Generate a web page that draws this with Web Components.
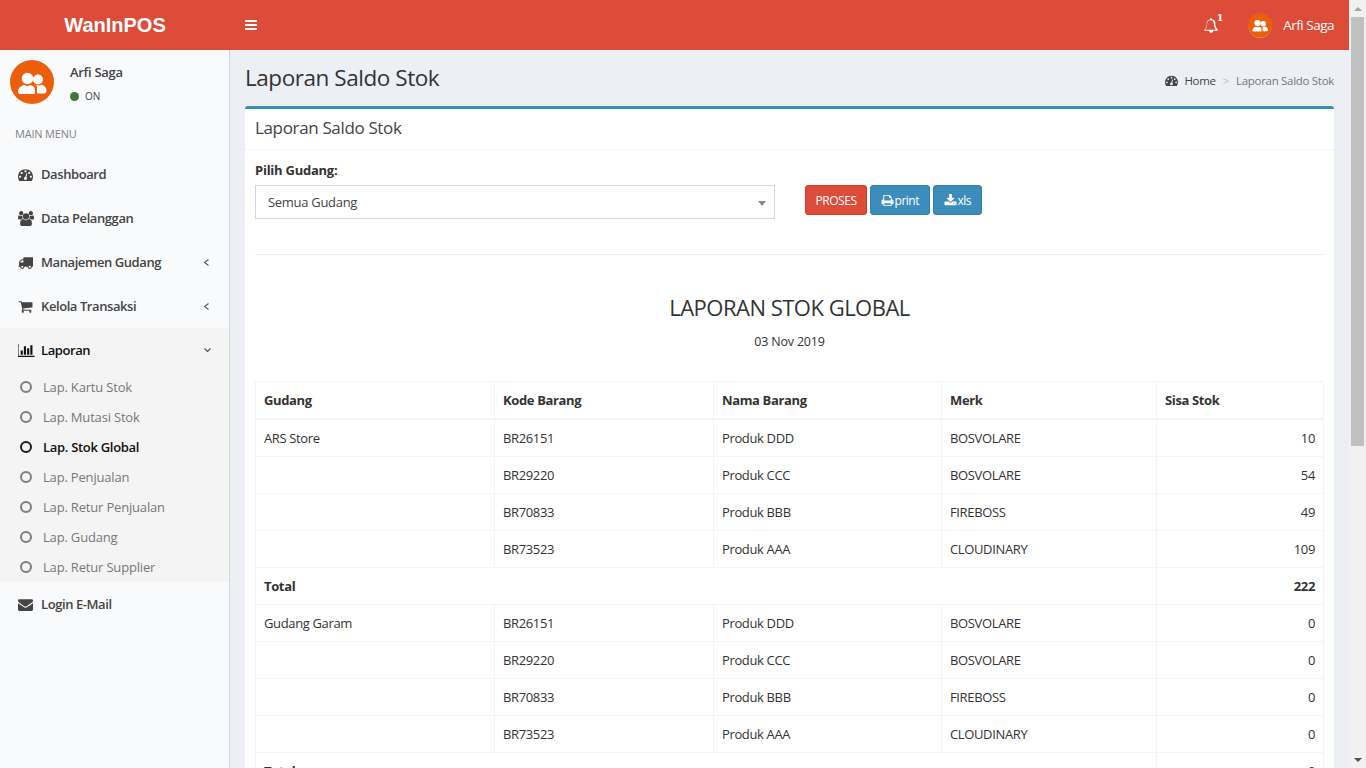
<!DOCTYPE html>
<html lang="id">
<head>
<meta charset="utf-8">
<title>Laporan Saldo Stok</title>
<style>
    html, body { margin: 0; height: 768px; overflow: hidden; }
    body { font-family: "Open Sans", sans-serif; font-size: 13px; color: #333; display: flex; }
</style>
</head>
<body>
<app-shell>
    <top-bar slot="top"></top-bar>
    <side-bar slot="side"></side-bar>
    <page-title></page-title>
    <report-box></report-box>
</app-shell>
<page-scrollbar></page-scrollbar>

<script>
const ICONS = {
    bars: ["0 0 1536 1792", "M1536 1344v128q0 26-19 45t-45 19h-1408q-26 0-45-19t-19-45v-128q0-26 19-45t45-19h1408q26 0 45 19t19 45zm0-512v128q0 26-19 45t-45 19h-1408q-26 0-45-19t-19-45v-128q0-26 19-45t45-19h1408q26 0 45 19t19 45zm0-512v128q0 26-19 45t-45 19h-1408q-26 0-45-19t-19-45v-128q0-26 19-45t45-19h1408q26 0 45 19t19 45z"],
    dashboard: ["0 0 1792 1792", "M384 1152q0-53-37.500-90.500t-90.500-37.500-90.500 37.500-37.500 90.500 37.500 90.500 90.500 37.500 90.500-37.500 37.500-90.500zm192-448q0-53-37.500-90.500t-90.500-37.500-90.500 37.500-37.500 90.500 37.500 90.500 90.500 37.500 90.500-37.500 37.500-90.500zm428 506l101-382q6-26-7.500-48.500t-38.500-29.500-48 6.500-30 39.500l-101 382q-60 5-107 43.500t-63 98.500q-20 77 20 146t117 89 146-20 89-117q16-60-6-117t-72-91zm660-58q0-53-37.500-90.500t-90.500-37.500-90.500 37.500-37.500 90.500 37.500 90.500 90.500 37.500 90.500-37.500 37.500-90.500zm-640-640q0-53-37.500-90.500t-90.500-37.500-90.500 37.500-37.500 90.500 37.500 90.500 90.500 37.500 90.500-37.500 37.500-90.500zm448 192q0-53-37.500-90.500t-90.500-37.500-90.500 37.500-37.500 90.500 37.500 90.500 90.500 37.500 90.500-37.500 37.500-90.500zm320 448q0 261-141 483-19 29-54 29h-1402q-35 0-54-29-141-221-141-483 0-182 71-348t191-286 286-191 348-71 348 71 286 191 191 286 71 348z"],
    users: ["0 0 1920 1792", "M593 896q-162 5-265 128h-134q-82 0-138-40.500t-56-118.500q0-353 124-353 6 0 43.500 21t97.500 42.500 119 21.500q67 0 133-23-5 37-5 66 0 139 81 256zm1071 637q0 120-73 189.500t-194 69.500h-874q-121 0-194-69.500t-73-189.500q0-53 3.500-103.500t14-109 26.500-108.500 43-97.500 62-81 85.500-53.500 111.500-20q10 0 43 21.500t73 48 107 48 135 21.500 135-21.500 107-48 73-48 43-21.500q61 0 111.500 20t85.500 53.500 62 81 43 97.500 26.500 108.500 14 109 3.500 103.500zm-1024-1277q0 106-75 181t-181 75-181-75-75-181 75-181 181-75 181 75 75 181zm704 384q0 159-112.500 271.500t-271.500 112.500-271.500-112.500-112.500-271.500 112.500-271.500 271.500-112.500 271.500 112.500 112.500 271.500zm576 225q0 78-56 118.500t-138 40.500h-134q-103-123-265-128 81-117 81-256 0-29-5-66 66 23 133 23 59 0 119-21.500t97.500-42.500 43.500-21q124 0 124 353zm-128-609q0 106-75 181t-181 75-181-75-75-181 75-181 181-75 181 75 75 181z"],
    truck: ["0 0 1792 1792", "M640 1408q0-52-38-90t-90-38-90 38-38 90 38 90 90 38 90-38 38-90zm-384-512h384v-256h-158q-13 0-22 9l-195 195q-9 9-9 22v30zm1280 512q0-52-38-90t-90-38-90 38-38 90 38 90 90 38 90-38 38-90zm256-1088v1024q0 15-4 26.500t-13.500 18.500-16.500 11.500-23.500 6-22.500 2-25.500 0-22.500-.5q0 106-75 181t-181 75-181-75-75-181h-384q0 106-75 181t-181 75-181-75-75-181h-64q-3 0-22.500.5t-25.500 0-22.500-2-23.500-6-16.500-11.500-13.500-18.500-4-26.500q0-26 19-45t45-19v-320q0-8-.5-35t0-38 2.500-34.500 6.500-37 14-30.500 22.500-30l198-198q19-19 50.500-32t58.500-13h160v-192q0-26 19-45t45-19h1024q26 0 45 19t19 45z"],
    cart: ["0 0 1792 1792", "M704 1536q0 52-38 90t-90 38-90-38-38-90 38-90 90-38 90 38 38 90zm896 0q0 52-38 90t-90 38-90-38-38-90 38-90 90-38 90 38 38 90zm128-1088v512q0 24-16.500 42.500t-40.500 21.500l-1044 122q13 60 13 70 0 16-24 64h920q26 0 45 19t19 45-19 45-45 19h-1024q-26 0-45-19t-19-45q0-11 8-31.500t16-36 21.500-40 15.500-29.500l-177-823h-204q-26 0-45-19t-19-45 19-45 45-19h256q16 0 28.500 6.500t19.500 15.500 13 24.500 8 26 5.500 29.500 4.500 26h1201q26 0 45 19t19 45z"],
    chart: ["0 0 2048 1792", "M576 896v512h-256v-512h256zm384-512v1024h-256v-1024h256zm1024 1152v128h-2048v-1536h128v1408h1920zm-640-896v768h-256v-768h256zm384-384v1152h-256v-1152h256z"],
    envelope: ["0 0 1792 1792", "M1792 710v794q0 66-47 113t-113 47h-1472q-66 0-113-47t-47-113v-794q44 49 101 87 362 246 497 345 57 42 92.500 65.500t94.500 48 110 24.500h2q51 0 110-24.500t94.500-48 92.500-65.500q170-123 498-345 57-39 100-87zm0-294q0 79-49 151t-122 123q-376 261-468 325-10 7-42.500 30.500t-54 38-52 32.500-57.500 27-50 9h-2q-23 0-50-9t-57.500-27-52-32.500-54-38-42.500-30.500q-91-64-262-182.500t-205-142.500q-62-42-117-115.500t-55-136.500q0-78 41.500-130t118.500-52h1472q65 0 112.500 47t47.500 113z"],
    print: ["0 0 1792 1792", "M448 1536h896v-256h-896v256zm0-640h896v-384h-160q-40 0-68-28t-28-68v-160h-640v640zm1152 64q0-26-19-45t-45-19-45 19-19 45 19 45 45 19 45-19 19-45zm128 0v416q0 13-9.500 22.500t-22.500 9.500h-224v160q0 40-28 68t-68 28h-960q-40 0-68-28t-28-68v-160h-224q-13 0-22.500-9.500t-9.500-22.500v-416q0-79 56.500-135.500t135.500-56.500h64v-544q0-40 28-68t68-28h672q40 0 88 20t76 48l152 152q28 28 48 76t20 88v256h64q79 0 135.500 56.500t56.500 135.500z"],
    download: ["0 0 1792 1792", "M1344 1344q0-26-19-45t-45-19-45 19-19 45 19 45 45 19 45-19 19-45zm256 0q0-26-19-45t-45-19-45 19-19 45 19 45 45 19 45-19 19-45zm128-224v320q0 40-28 68t-68 28h-1472q-40 0-68-28t-28-68v-320q0-40 28-68t68-28h465l135 136q58 56 136 56t136-56l136-136h464q40 0 68 28t28 68zm-325-569q17 41-14 70l-448 448q-18 19-45 19t-45-19l-448-448q-31-29-14-70 17-39 59-39h256v-448q0-26 19-45t45-19h256q26 0 45 19t19 45v448h256q42 0 59 39z"],
    bell: ["0 0 1792 1792", "M912 1696q0-16-16-16-59 0-101.500-42.500t-42.500-101.500q0-16-16-16t-16 16q0 73 51.500 124.500t124.500 51.500q16 0 16-16zm-666-288h1300q-266-300-266-832 0-51-24-105t-69-103-121.500-80.500-169.500-31.500-169.500 31.500-121.500 80.500-69 103-24 105q0 532-266 832zm1546 0q0 52-38 90t-90 38h-448q0 106-75 181t-181 75-181-75-75-181h-448q-52 0-90-38t-38-90q50-42 91-88t85-119.500 74.500-158.500 50-206 19.500-260q0-152 117-282.500t307-158.500q-8-19-8-39 0-40 28-68t68-28 68 28 28 68q0 20-8 39 190 28 307 158.500t117 282.500q0 139 19.500 260t50 206 74.500 158.500 85 119.500 91 88z"]
};

const FONT = `"Open Sans", "Noto Sans", sans-serif`;

function icon(name, size) {
    const [box, d] = ICONS[name];
    const w = box.split(" ")[2] / 1792 * size;
    return `<svg width="${w}" height="${size}" viewBox="${box}" fill="currentColor" style="display:block"><path d="${d}"/></svg>`;
}

// orange round avatar with two people, used in the header and the sidebar
function avatar(size) {
    return `<svg width="${size}" height="${size}" viewBox="0 0 44 44" style="display:block">
        <circle cx="22" cy="22" r="22" fill="#eb5e0b"/>
        <g fill="#fff">
            <circle cx="17.500" cy="18.500" r="5.800"/>
            <circle cx="28" cy="19.500" r="5"/>
            <path d="M8 31.500c0-3.500 3.500-6 6.500-6.500 2 1.300 4 1.300 6 0 2 .5 3.700 1.500 4.300 3.500v5.500h-14.800c-1.200 0-2-1-2-2.500z"/>
            <path d="M31.500 24.800c2.500.7 5 2.700 5 6 0 1.500-.8 2.700-2 2.700h-7.500v-6c0-1-.6-2-1.200-2.700 2 .8 4.200.8 5.700 0z"/>
        </g>
    </svg>`;
}

class AppShell extends HTMLElement {
    constructor() {
        super();
        this.attachShadow({ mode: "open" });
        this.shadowRoot.innerHTML = `
            <style>
                :host { display: flex; flex-direction: column; width: 1349px; height: 768px; flex: none; background: #ecf0f5; overflow: hidden; }
                .row { display: flex; flex: 1; min-height: 0; }
                main { flex: 1; min-width: 0; padding: 0 15px; }
            </style>
            <slot name="top"></slot>
            <div class="row">
                <slot name="side"></slot>
                <main><slot></slot></main>
            </div>`;
    }
}

class TopBar extends HTMLElement {
    constructor() {
        super();
        this.attachShadow({ mode: "open" });
        this.shadowRoot.innerHTML = `
            <style>
                :host { display: flex; align-items: center; height: 50px; flex: none; background: #dd4b39; color: #fff; }
                .logo { width: 230px; text-align: center; font: bold 20px "Liberation Sans", Arial, sans-serif; }
                .toggle { margin-left: 15px; }
                .right { margin-left: auto; display: flex; align-items: center; padding-right: 15px; }
                .bell { position: relative; margin-right: 30px; }
                .badge { position: absolute; top: -6px; right: -5px; font: bold 9.500px "DejaVu Serif", serif; }
                .name { font: 13.500px ${FONT}; margin-left: 11px; letter-spacing: -.5px; }
                .av { border-radius: 50%; box-shadow: 0 1px 0 #f08a4a; }
            </style>
            <div class="logo">WanInPOS</div>
            <div class="toggle">${icon("bars", 14)}</div>
            <div class="right">
                <div class="bell">${icon("bell", 15)}<span class="badge">1</span></div>
                <div class="av">${avatar(24)}</div>
                <span class="name">Arfi Saga</span>
            </div>`;
    }
}

class SideItem extends HTMLElement {
    constructor() {
        super();
        this.attachShadow({ mode: "open" });
    }
    connectedCallback() {
        const arrow = this.getAttribute("arrow");
        const down = arrow === "down";
        const chevron = down ? "M.5.5l3 3 3-3" : "M4.500.5l-4 3 4 3";
        this.shadowRoot.innerHTML = `
            <style>
                :host { display: flex; align-items: center; height: 44px; padding-left: 18px; padding-right: 18px; color: #444; font: 600 13px ${FONT}; letter-spacing: -.42px; }
                :host([open]) { background: #f4f4f5; color: #111; }
                :host([arrow="left"]) { padding-right: 20px; }
                .ic { width: 23px; flex: none; }
                .label { flex: 1; }
                svg.ch { display: block; }
            </style>
            <span class="ic">${icon(this.getAttribute("icon"), 15)}</span>
            <span class="label">${this.getAttribute("label")}</span>
            ${arrow ? `<svg class="ch" width="${down ? 7 : 5}" height="${down ? 4 : 7}" viewBox="0 0 ${down ? "7 4" : "5 7"}" fill="none" stroke="#555" stroke-width="1.100"><path d="${chevron}"/></svg>` : ""}`;
    }
}

class SubItem extends HTMLElement {
    constructor() {
        super();
        this.attachShadow({ mode: "open" });
        this.shadowRoot.innerHTML = `
            <style>
                :host { display: flex; align-items: center; height: 30px; padding-left: 20px; color: #777; font: 13px ${FONT}; letter-spacing: -.18px; }
                :host([active]) { color: #111; font-weight: 600; letter-spacing: -.3px; }
                i { width: 8px; height: 8px; border: 2px solid currentColor; border-radius: 50%; margin-right: 11px; opacity: .95; }
            </style>
            <i></i><span><slot></slot></span>`;
    }
}

class SideBar extends HTMLElement {
    constructor() {
        super();
        this.attachShadow({ mode: "open" });
        this.shadowRoot.innerHTML = `
            <style>
                :host { display: block; width: 229px; flex: none; background: #f9fafc; border-right: 1px solid #d2d6de; }
                .user { display: flex; padding: 10px 10px 0; height: 49px; }
                .user .txt { margin-left: 16px; color: #444; }
                .nm { font: 600 13px ${FONT}; margin-top: 3px; letter-spacing: -.3px; }
                .st { display: flex; align-items: center; font: 10px ${FONT}; margin-top: 8px; }
                .st i { width: 9px; height: 9px; border-radius: 50%; background: #3c7a3c; margin-right: 6px; }
                .head { font: 11px ${FONT}; color: #848484; padding: 17px 15px 0; height: 36px; box-sizing: border-box; letter-spacing: -.2px; }
                .group { background: #f4f4f5; }
                .menu { margin-top: 7px; }
            </style>
            <div class="user">
                ${avatar(44)}
                <div class="txt">
                    <div class="nm">Arfi Saga</div>
                    <div class="st"><i></i>ON</div>
                </div>
            </div>
            <div class="head">MAIN MENU</div>
            <div class="menu">
                <side-item icon="dashboard" label="Dashboard"></side-item>
                <side-item icon="users" label="Data Pelanggan"></side-item>
                <side-item icon="truck" label="Manajemen Gudang" arrow="left"></side-item>
                <side-item icon="cart" label="Kelola Transaksi" arrow="left"></side-item>
                <div class="group">
                    <side-item icon="chart" label="Laporan" arrow="down" open></side-item>
                    <div class="subs">
                        <sub-item>Lap. Kartu Stok</sub-item>
                        <sub-item>Lap. Mutasi Stok</sub-item>
                        <sub-item active>Lap. Stok Global</sub-item>
                        <sub-item>Lap. Penjualan</sub-item>
                        <sub-item>Lap. Retur Penjualan</sub-item>
                        <sub-item>Lap. Gudang</sub-item>
                        <sub-item>Lap. Retur Supplier</sub-item>
                    </div>
                </div>
                <side-item icon="envelope" label="Login E-Mail"></side-item>
            </div>`;
    }
}

class PageTitle extends HTMLElement {
    constructor() {
        super();
        this.attachShadow({ mode: "open" });
        this.shadowRoot.innerHTML = `
            <style>
                :host { display: flex; align-items: center; box-sizing: border-box; height: 56px; padding-bottom: 2px; color: #333; }
                h1 { font: 22.500px ${FONT}; margin: 0; flex: 1; letter-spacing: -.45px; }
                .crumb { display: flex; align-items: center; font: 11.500px ${FONT}; color: #444; margin-top: 6px; letter-spacing: -.3px; }
                .crumb span { margin-left: 6px; }
                .crumb .sep { color: #b8bcc2; margin: 0 7px; }
                .crumb .cur { color: #777; margin: 0; }
            </style>
            <h1>Laporan Saldo Stok</h1>
            <div class="crumb">${icon("dashboard", 13)}<span>Home</span><span class="sep">&gt;</span><span class="cur">Laporan Saldo Stok</span></div>`;
    }
}

class StockTable extends HTMLElement {
    constructor() {
        super();
        this.attachShadow({ mode: "open" });
    }
    connectedCallback() {
        const items = [
            ["BR26151", "Produk DDD", "BOSVOLARE"],
            ["BR29220", "Produk CCC", "BOSVOLARE"],
            ["BR70833", "Produk BBB", "FIREBOSS"],
            ["BR73523", "Produk AAA", "CLOUDINARY"]
        ];
        const groups = [
            { name: "ARS Store", stock: [10, 54, 49, 109], total: 222 },
            { name: "Gudang Garam", stock: [0, 0, 0, 0], total: 0 }
        ];
        let rows = "";
        groups.forEach((g) => {
            items.forEach((it, i) => {
                rows += `<tr><td>${i === 0 ? g.name : ""}</td><td>${it[0]}</td><td>${it[1]}</td><td>${it[2]}</td><td class="num">${g.stock[i]}</td></tr>`;
            });
            rows += `<tr class="total"><td colspan="4">Total</td><td class="num">${g.total}</td></tr>`;
        });
        this.shadowRoot.innerHTML = `
            <style>
                :host { display: block; font: 13px ${FONT}; color: #333; letter-spacing: -.36px; }
                table { width: 1068px; border-collapse: collapse; table-layout: fixed; }
                th, td { border: 1px solid #f4f4f4; padding: 8px; height: 20px; line-height: 20px; text-align: left; }
                th { border-bottom-width: 2px; font-weight: 700; }
                .num { text-align: right; }
                .total td { font-weight: 700; }
            </style>
            <table>
                <colgroup><col style="width:239px"><col style="width:219px"><col style="width:228px"><col style="width:215px"><col style="width:167px"></colgroup>
                <thead><tr><th>Gudang</th><th>Kode Barang</th><th>Nama Barang</th><th>Merk</th><th>Sisa Stok</th></tr></thead>
                <tbody>${rows}</tbody>
            </table>`;
    }
}

class ReportBox extends HTMLElement {
    constructor() {
        super();
        this.attachShadow({ mode: "open" });
        this.shadowRoot.innerHTML = `
            <style>
                :host { display: block; background: #fff; border-top: 3px solid #3c8dbc; border-radius: 3px 3px 0 0; box-shadow: 0 1px 1px rgba(0,0,0,.1); color: #333; }
                .title { height: 40px; padding-left: 10px; border-bottom: 1px solid #f4f4f4; font: 17px/38px ${FONT}; color: #444; letter-spacing: -.35px; }
                .body { padding: 10px; }
                label { display: block; font: 700 13px/20px ${FONT}; letter-spacing: -.25px; margin-bottom: 5px; }
                .form { display: flex; align-items: flex-start; height: 94px; border-bottom: 1px solid #eee; }
                .sel { position: relative; box-sizing: border-box; width: 520px; height: 34px; border: 1px solid #d2d6de; padding-left: 12px; font: 13px/32px ${FONT}; color: #444; letter-spacing: -.3px; }
                .sel::after { content: ""; position: absolute; right: 8px; top: 15px; border: 4.500px solid transparent; border-top: 5px solid #888; border-bottom: 0; }
                .btns { display: flex; gap: 3px; margin-left: 30px; margin-top: 25px; }
                button { display: flex; align-items: center; gap: 1px; height: 30px; padding: 0 10px 0 9.500px; border: 1px solid #367fa9; border-radius: 3px; background: #3c8dbc; color: #fff; font: 12px ${FONT}; letter-spacing: -.5px; }
                button.red { background: #dd4b39; border-color: #d73925; padding: 0 9.500px; letter-spacing: -.45px; }
                h2 { font: 400 22px/24px ${FONT}; text-align: center; margin: 40px 0 0; letter-spacing: -.5px; }
                .date { text-align: center; font: 12.500px/20px ${FONT}; margin-top: 13px; margin-bottom: 29px; letter-spacing: -.2px; }
            </style>
            <div class="title">Laporan Saldo Stok</div>
            <div class="body">
                <div class="form">
                    <div>
                        <label>Pilih Gudang:</label>
                        <div class="sel">Semua Gudang</div>
                    </div>
                    <div class="btns">
                        <button class="red">PROSES</button>
                        <button>${icon("print", 13)}print</button>
                        <button>${icon("download", 13)}xls</button>
                    </div>
                </div>
                <h2>LAPORAN STOK GLOBAL</h2>
                <div class="date">03 Nov 2019</div>
                <stock-table></stock-table>
            </div>`;
    }
}

class PageScrollbar extends HTMLElement {
    constructor() {
        super();
        this.attachShadow({ mode: "open" });
        this.shadowRoot.innerHTML = `
            <style>
                :host { display: flex; flex-direction: column; width: 17px; height: 768px; flex: none; background: #f1f1f1; }
                .arrow { height: 17px; display: flex; align-items: center; justify-content: center; flex: none; }
                .up { border: 4px solid transparent; border-bottom: 4px solid #a3a3a3; border-top: 0; }
                .down { border: 4px solid transparent; border-top: 4px solid #505050; border-bottom: 0; }
                .track { flex: 1; }
                .thumb { height: 429px; margin: 0 2px; background: #c1c1c1; }
            </style>
            <div class="arrow"><div class="up"></div></div>
            <div class="track"><div class="thumb"></div></div>
            <div class="arrow"><div class="down"></div></div>`;
    }
}

customElements.define("app-shell", AppShell);
customElements.define("top-bar", TopBar);
customElements.define("side-item", SideItem);
customElements.define("sub-item", SubItem);
customElements.define("side-bar", SideBar);
customElements.define("page-title", PageTitle);
customElements.define("stock-table", StockTable);
customElements.define("report-box", ReportBox);
customElements.define("page-scrollbar", PageScrollbar);
</script>
</body>
</html>
